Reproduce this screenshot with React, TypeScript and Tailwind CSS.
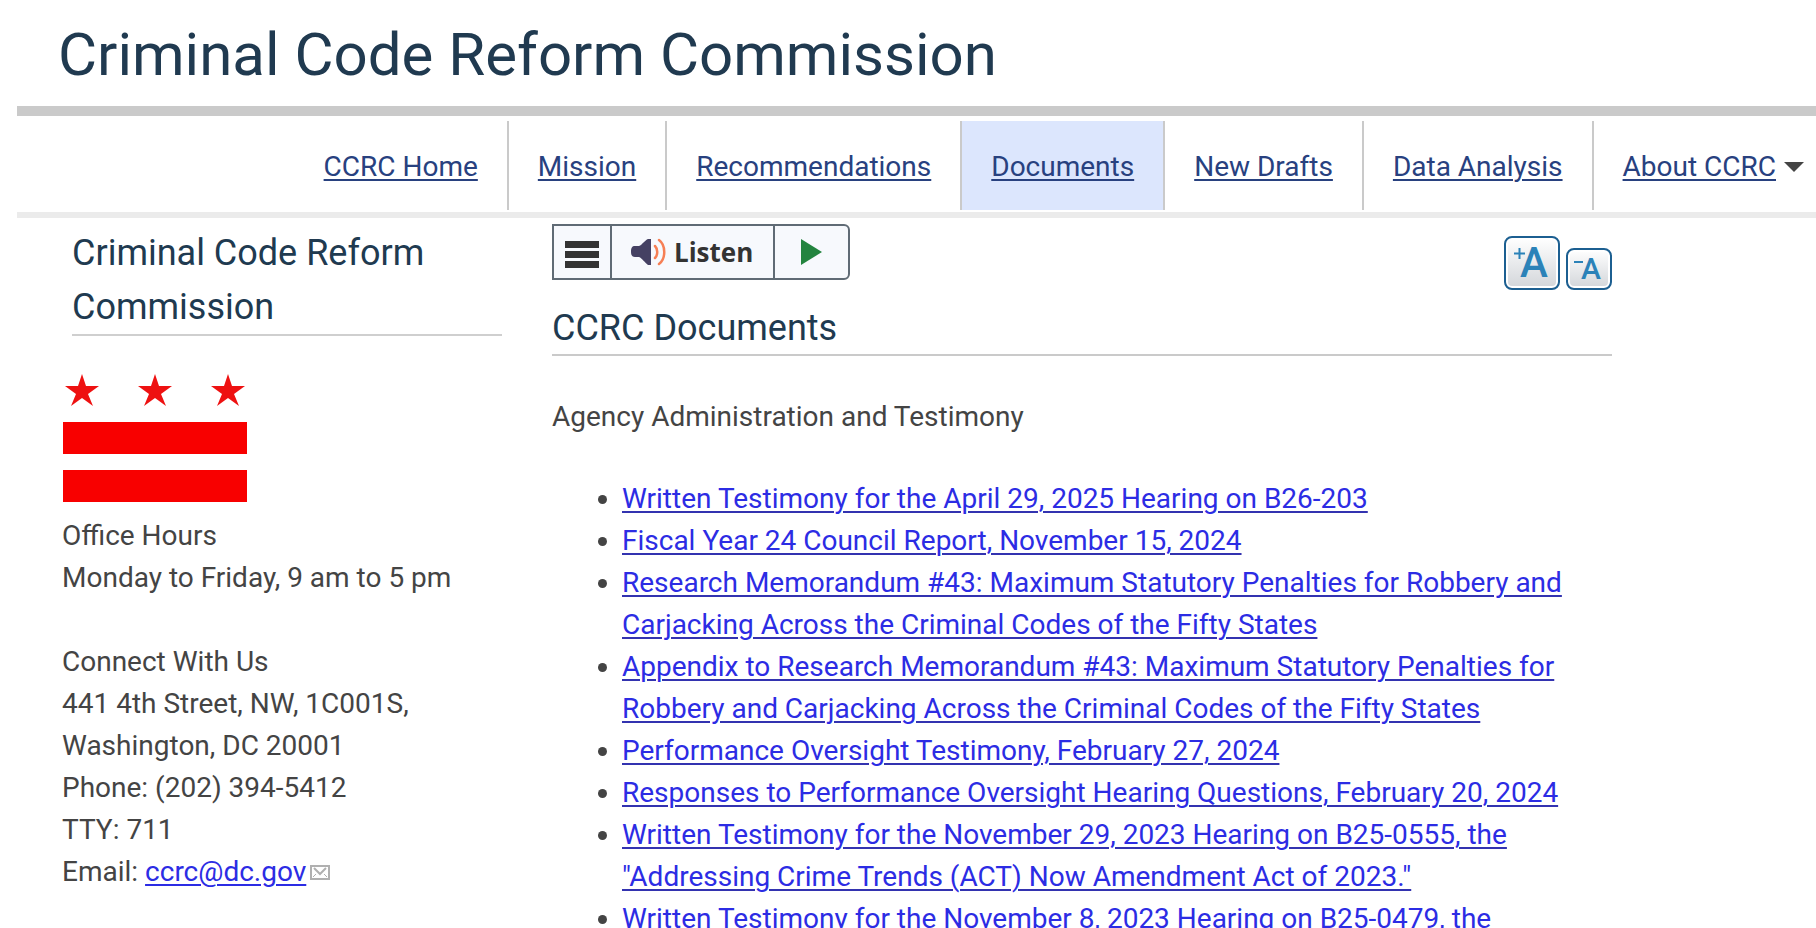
interface NavItem {
  label: string;
  path: string;
  active?: boolean;
  hasMenu?: boolean;
}

interface DocumentLink {
  label: string;
  path: string;
}

const navItems: NavItem[] = [
  { label: 'CCRC Home', path: '#home' },
  { label: 'Mission', path: '#mission' },
  { label: 'Recommendations', path: '#recommendations' },
  { label: 'Documents', path: '#documents', active: true },
  { label: 'New Drafts', path: '#drafts' },
  { label: 'Data Analysis', path: '#data' },
  { label: 'About CCRC', path: '#about', hasMenu: true },
];

const documents: DocumentLink[] = [
  { label: 'Written Testimony for the April 29, 2025 Hearing on B26-203', path: '#b26-203' },
  { label: 'Fiscal Year 24 Council Report, November 15, 2024', path: '#fy24' },
  {
    label:
      'Research Memorandum #43: Maximum Statutory Penalties for Robbery and Carjacking Across the Criminal Codes of the Fifty States',
    path: '#memo-43',
  },
  {
    label:
      'Appendix to Research Memorandum #43: Maximum Statutory Penalties for Robbery and Carjacking Across the Criminal Codes of the Fifty States',
    path: '#memo-43-appendix',
  },
  { label: 'Performance Oversight Testimony, February 27, 2024', path: '#oversight' },
  { label: 'Responses to Performance Oversight Hearing Questions, February 20, 2024', path: '#responses' },
  {
    label:
      'Written Testimony for the November 29, 2023 Hearing on B25-0555, the "Addressing Crime Trends (ACT) Now Amendment Act of 2023."',
    path: '#b25-0555',
  },
  { label: 'Written Testimony for the November 8, 2023 Hearing on B25-0479, the', path: '#b25-0479' },
];

const star = '0,-17 4,-5 17,-5 6,3 11,15 0,7 -11,15 -6,3 -17,-5 -4,-5';

function Flag() {
  return (
    <svg className="block h-[132px] w-[186px]" viewBox="0 0 186 132" role="img" aria-label="District of Columbia flag">
      <g fill="#ee1111">
        <polygon points={star} transform="translate(20 19)" />
        <polygon points={star} transform="translate(93 19)" />
        <polygon points={star} transform="translate(166 19)" />
      </g>
      <rect x="1" y="50" width="184" height="32" fill="#f80000" />
      <rect x="1" y="98" width="184" height="32" fill="#f80000" />
    </svg>
  );
}

function ListenBar() {
  return (
    <div className="flex h-14 rounded-r-md border-2 border-[#606b75] bg-[#f7f9fd]">
      <button type="button" aria-label="Reader menu" className="flex w-[58px] items-center justify-center border-r-2 border-[#606b75]">
        <svg className="mt-1 h-[27px] w-[34px]" viewBox="0 0 34 27" fill="#333">
          <rect width="34" height="7" />
          <rect y="10" width="34" height="7" />
          <rect y="20" width="34" height="7" />
        </svg>
      </button>
      <button
        type="button"
        className="flex w-[163px] items-center gap-2 border-r-2 border-[#606b75] pl-[18px] font-['Open_Sans',sans-serif] text-[26px] font-bold text-[#333]"
      >
        <svg className="h-7 w-9" viewBox="0 0 36 28" fill="none">
          <path d="M5 8h4c3-1 6-6 9-7h3v26h-3c-3-2-6-7-9-8H5c-3 0-4-2-4-5.500s1-5.500 4-5.500z" fill="#454163" />
          <path d="M25 8c3 3 3 9 0 12M29 2c7 5 7 19 0 24" stroke="#f67f55" strokeWidth="2.5" strokeLinecap="round" />
        </svg>
        Listen
      </button>
      <button type="button" aria-label="Play" className="flex w-[73px] items-center justify-center">
        <svg className="h-[26px] w-[21px]" viewBox="0 0 21 26">
          <path d="M0 0L21 13L0 26z" fill="#23843f" />
        </svg>
      </button>
    </div>
  );
}

function FontSizeButtons() {
  return (
    <div className="flex items-end gap-[6px] text-[#2b82b8]">
      <button
        type="button"
        aria-label="Increase font size"
        className="relative flex h-[54px] w-14 items-center justify-center rounded-lg border-2 border-[#1c5f91] bg-linear-to-b from-white to-[#d3d6da] pl-1 text-[42px] leading-none font-medium shadow-[inset_0_0_0_2px_#ffffff]"
      >
        <svg className="absolute top-[10px] left-2 h-[11px] w-[11px]" viewBox="0 0 11 11" stroke="currentColor" strokeWidth="2">
          <path d="M5.5 0v11M0 5.5h11" />
        </svg>
        A
      </button>
      <button
        type="button"
        aria-label="Decrease font size"
        className="relative flex h-[42px] w-[46px] items-center justify-center rounded-lg border-2 border-[#1c5f91] bg-linear-to-b from-white to-[#d3d6da] pl-1 text-[30px] leading-none font-medium shadow-[inset_0_0_0_2px_#ffffff]"
      >
        <svg className="absolute top-[11px] left-[6px] h-[2px] w-[9px]" viewBox="0 0 9 2" fill="currentColor">
          <rect width="9" height="2" />
        </svg>
        A
      </button>
    </div>
  );
}

export default function App() {
  return (
    <div className="h-screen overflow-hidden bg-white pl-[17px] font-[Roboto,sans-serif] text-[28px] leading-[42px] font-[450] text-[#444]">
      <header className="h-[106px] pt-5 pl-[41px]">
        <h1 className="text-[60px] leading-[70px] text-[#203a50]">Criminal Code Reform Commission</h1>
      </header>

      <nav className="flex h-[106px] justify-end border-t-10 border-[#cacaca] pt-[5px] pb-[2px]">
        {navItems.map((item, index) => (
          <div
            key={item.label}
            className={`flex items-center pt-[2px] pr-[29px] pl-[29px] last:pr-3 ${
              index > 0 ? 'border-l-2 border-[#cacaca]' : ''
            } ${item.active ? 'bg-[#dce6fd]' : ''}`}
          >
            <a href={item.path} className="whitespace-nowrap text-[#28417f] underline decoration-2 underline-offset-3">
              {item.label}
            </a>
            {item.hasMenu && (
              <svg className="ml-2 h-[10px] w-5" viewBox="0 0 20 10">
                <path d="M0 0h20L10 10z" fill="#444" />
              </svg>
            )}
          </div>
        ))}
      </nav>
      <div className="h-[6px] bg-[#ebebeb]" />

      <div className="flex pr-[204px]">
        <aside className="w-[485px] shrink-0 pl-[45px]">
          <h2 className="ml-[10px] border-b-2 border-[#cfcfcf] pt-2 text-[36px] leading-[54px] text-[#203a50]">
            Criminal Code Reform Commission
          </h2>
          <div className="pt-9">
            <Flag />
          </div>
          <p className="pt-[11px]">
            Office Hours
            <br />
            Monday to Friday, 9 am to 5 pm
          </p>
          <address className="pt-[42px] not-italic">
            Connect With Us
            <br />
            441 4th Street, NW, 1C001S,
            <br />
            Washington, DC 20001
            <br />
            Phone: (202) 394-5412
            <br />
            TTY: 711
            <br />
            Email:{' '}
            <a href="mailto:ccrc@dc.gov" className="text-[#2c2ce4] underline decoration-2 underline-offset-3">
              ccrc@dc.gov
            </a>
            <svg className="ml-1 inline-block h-4 w-5 align-baseline" viewBox="0 0 20 16" fill="none" stroke="#b0b0b0">
              <rect x="1" y="1" width="18" height="13" strokeWidth="2" />
              <path d="M4 3l6 6l6-6" strokeWidth="2" />
              <path d="M3 12l3-3M17 12l-3-3" strokeWidth="1" />
            </svg>
          </address>
        </aside>

        <main className="ml-[50px] min-w-0 flex-1">
          <div className="flex items-start justify-between pt-[6px]">
            <ListenBar />
            <div className="pt-3">
              <FontSizeButtons />
            </div>
          </div>
          <h2 className="border-b-2 border-[#cacaca] pt-3 text-[36px] leading-[52px] text-[#203a50]">CCRC Documents</h2>
          <p className="pt-10">Agency Administration and Testimony</p>
          <ul className="list-disc pt-10 pl-[70px]">
            {documents.map((doc) => (
              <li key={doc.path}>
                <a href={doc.path} className="text-[#2c2ce4] underline decoration-[#3333b0] decoration-2 underline-offset-3">
                  {doc.label}
                </a>
              </li>
            ))}
          </ul>
        </main>
      </div>
    </div>
  );
}
